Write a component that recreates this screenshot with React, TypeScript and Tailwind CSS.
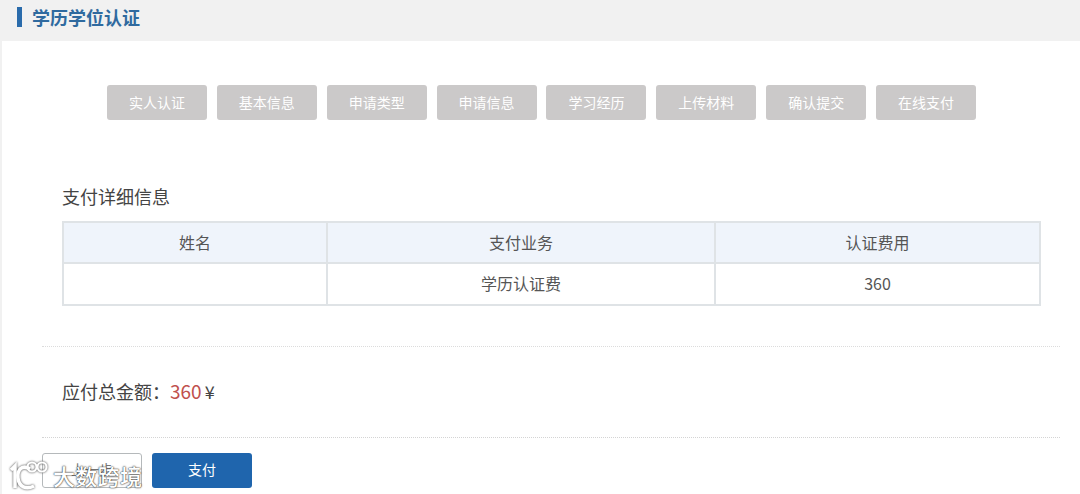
const FONT = "font-['Noto_Sans_CJK_SC','Liberation_Sans',sans-serif]";

const STEPS = ['实人认证', '基本信息', '申请类型', '申请信息', '学习经历', '上传材料', '确认提交', '在线支付'];

function Watermark() {
  return (
    <div className="absolute left-[9px] top-[458px] flex items-center text-white pointer-events-none">
      <svg width="44" height="34" viewBox="0 0 44 34" fill="none" className="drop-shadow-[0_0_1px_rgba(60,60,60,1)]">
        <g stroke="#ffffff">
          <path d="M2 12 L6 8 V30" strokeWidth="3.5" />
          <path d="M21 11 C13 6 8 12 9 20 C10 29 17 32 25 28" strokeWidth="3.5" />
          <circle cx="23" cy="9" r="4.5" strokeWidth="2.2" />
          <circle cx="33" cy="9" r="4.5" strokeWidth="2.2" />
        </g>
      </svg>
      <span className="text-[22px] leading-[34px] font-medium tracking-[0.3px] [text-shadow:0_0_2px_rgba(50,50,50,1),0_0_1px_rgba(50,50,50,1)]">大数跨境</span>
    </div>
  );
}

export default function App() {
  return (
    <div className={`${FONT} relative w-[1080px] h-[494px] overflow-hidden bg-[#f1f1f1]`}>
      <div className="h-[41px] pl-[17px] pb-[7px] flex items-center">
        <span className="w-[5px] h-[20px] bg-[#2a6bab]" />
        <span className="ml-[10px] text-[18px] leading-[24px] font-bold text-[#2f6a9f]">学历学位认证</span>
      </div>

      <div className="ml-[2px] h-[453px] bg-white pt-[44px]">
        <div className="flex pl-[105px] gap-[9.86px]">
          {STEPS.map((s) => (
            <div key={s} className="w-[100px] h-[35px] rounded-[3px] bg-[#cbc9c9] text-white text-[14px] flex items-center justify-center">
              {s}
            </div>
          ))}
        </div>

        <h2 className="ml-[60px] mt-[64px] text-[18px] leading-[24px] font-normal text-[#444444]">支付详细信息</h2>

        <div className="ml-[60px] mt-[13px] w-[979px] border-2 border-[#dfe3e6] text-[16px] text-[#555555]">
          <div className="flex h-[41px] bg-[#eff4fb] border-b-2 border-[#dfe3e6]">
            <div className="w-[264px] pb-[2px] flex items-center justify-center border-r-2 border-[#dfe3e6]">姓名</div>
            <div className="w-[388px] pb-[2px] flex items-center justify-center border-r-2 border-[#dfe3e6]">支付业务</div>
            <div className="flex-1 pb-[2px] flex items-center justify-center">认证费用</div>
          </div>
          <div className="flex h-[40px]">
            <div className="w-[264px] border-r-2 border-[#dfe3e6]" />
            <div className="w-[388px] pb-[2px] flex items-center justify-center border-r-2 border-[#dfe3e6]">学历认证费</div>
            <div className="flex-1 pb-[2px] flex items-center justify-center">360</div>
          </div>
        </div>

        <div className="ml-[40px] mt-[40px] w-[1018px] border-t border-dotted border-[#dcdcdc]" />

        <div className="ml-[60px] mt-[32px] h-[24px] flex items-center text-[18px] text-[#444444]">
          <span>应付总金额：</span>
          <span className="text-[#c0504d] text-[19px]">360</span>
          <span className="ml-[3px] text-[18px]">¥</span>
        </div>

        <div className="ml-[40px] mt-[34px] w-[1018px] border-t border-dotted border-[#d4d4d4]" />

        <div className="ml-[40px] mt-[15px] flex gap-[10px]">
          <button className="w-[100px] h-[35px] pb-[2px] rounded-[3px] border border-[#b5b9bb] bg-white text-[14px] text-[#777777]">上一步</button>
          <button className="w-[100px] h-[35px] pb-[2px] rounded-[3px] bg-[#1f65ad] text-white text-[14px]">支付</button>
        </div>
      </div>

      <Watermark />
    </div>
  );
}
